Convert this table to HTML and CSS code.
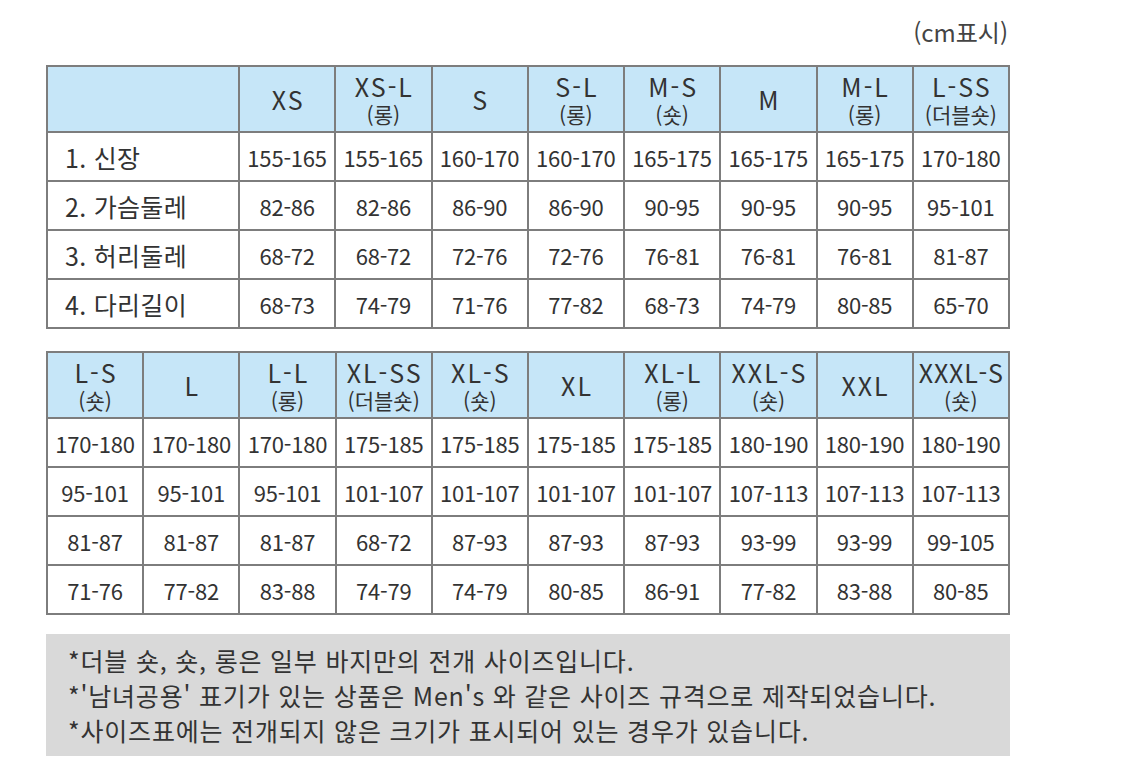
FILE: index.html
```html
<!DOCTYPE html>
<html lang="ko">
<head>
<meta charset="utf-8">
<title>사이즈표</title>
<link rel="stylesheet" href="styles.css">
</head>
<body>
<div class="page">
  <div class="unit">(cm표시)</div>

  <table class="size first">
    <colgroup>
      <col class="c-label"><col><col><col><col><col><col><col><col>
    </colgroup>
    <thead>
      <tr>
        <th></th>
        <th><span class="m">XS</span></th>
        <th><span class="m">XS-L</span><span class="s">(롱)</span></th>
        <th><span class="m">S</span></th>
        <th><span class="m">S-L</span><span class="s">(롱)</span></th>
        <th><span class="m">M-S</span><span class="s">(숏)</span></th>
        <th><span class="m">M</span></th>
        <th><span class="m">M-L</span><span class="s">(롱)</span></th>
        <th><span class="m">L-SS</span><span class="s">(더블숏)</span></th>
      </tr>
    </thead>
    <tbody>
      <tr><td class="label">1. 신장</td><td>155-165</td><td>155-165</td><td>160-170</td><td>160-170</td><td>165-175</td><td>165-175</td><td>165-175</td><td>170-180</td></tr>
      <tr><td class="label">2. 가슴둘레</td><td>82-86</td><td>82-86</td><td>86-90</td><td>86-90</td><td>90-95</td><td>90-95</td><td>90-95</td><td>95-101</td></tr>
      <tr><td class="label">3. 허리둘레</td><td>68-72</td><td>68-72</td><td>72-76</td><td>72-76</td><td>76-81</td><td>76-81</td><td>76-81</td><td>81-87</td></tr>
      <tr><td class="label">4. 다리길이</td><td>68-73</td><td>74-79</td><td>71-76</td><td>77-82</td><td>68-73</td><td>74-79</td><td>80-85</td><td>65-70</td></tr>
    </tbody>
  </table>

  <table class="size second">
    <thead>
      <tr>
        <th><span class="m">L-S</span><span class="s">(숏)</span></th>
        <th><span class="m">L</span></th>
        <th><span class="m">L-L</span><span class="s">(롱)</span></th>
        <th><span class="m">XL-SS</span><span class="s">(더블숏)</span></th>
        <th><span class="m">XL-S</span><span class="s">(숏)</span></th>
        <th><span class="m">XL</span></th>
        <th><span class="m">XL-L</span><span class="s">(롱)</span></th>
        <th><span class="m">XXL-S</span><span class="s">(숏)</span></th>
        <th><span class="m">XXL</span></th>
        <th><span class="m tight">XXXL-S</span><span class="s">(숏)</span></th>
      </tr>
    </thead>
    <tbody>
      <tr><td>170-180</td><td>170-180</td><td>170-180</td><td>175-185</td><td>175-185</td><td>175-185</td><td>175-185</td><td>180-190</td><td>180-190</td><td>180-190</td></tr>
      <tr><td>95-101</td><td>95-101</td><td>95-101</td><td>101-107</td><td>101-107</td><td>101-107</td><td>101-107</td><td>107-113</td><td>107-113</td><td>107-113</td></tr>
      <tr><td>81-87</td><td>81-87</td><td>81-87</td><td>68-72</td><td>87-93</td><td>87-93</td><td>87-93</td><td>93-99</td><td>93-99</td><td>99-105</td></tr>
      <tr><td>71-76</td><td>77-82</td><td>83-88</td><td>74-79</td><td>74-79</td><td>80-85</td><td>86-91</td><td>77-82</td><td>83-88</td><td>80-85</td></tr>
    </tbody>
  </table>

  <div class="notes">
    <p>*더블 숏, 숏, 롱은 일부 바지만의 전개 사이즈입니다.</p>
    <p>*'남녀공용' 표기가 있는 상품은 Men's 와 같은 사이즈 규격으로 제작되었습니다.</p>
    <p>*사이즈표에는 전개되지 않은 크기가 표시되어 있는 경우가 있습니다.</p>
  </div>
</div>
</body>
</html>
```

FILE: styles.css
```css
html, body {
  margin: 0;
  padding: 0;
  background: #ffffff;
}

body {
  font-family: "Noto Sans CJK KR", "Noto Sans", sans-serif;
  color: #333333;
}

.page {
  width: 964px;
  margin-left: 46px;
  padding-top: 17px;
}

.unit {
  text-align: right;
  font-size: 24px;
  line-height: 30px;
  padding-right: 2px;
  color: #444444;
}

.size {
  width: 964px;
  border-collapse: collapse;
  table-layout: fixed;
  border: 2px solid #7d7d7d;
}

.size.first {
  margin-top: 18px;
}

.size.second {
  margin-top: 22px;
}

.size col.c-label {
  width: 192px;
}

.size th,
.size td {
  border: 2px solid #7d7d7d;
  padding: 0;
  text-align: center;
  vertical-align: middle;
  white-space: nowrap;
  overflow: visible;
}

.size th {
  background: #c6e6f8;
  height: 64px;
  font-weight: normal;
  color: #333333;
}

.size th .m {
  display: block;
  font-size: 25px;
  line-height: 31px;
  letter-spacing: 2px;
  padding-left: 2px;
}

.size th .m.tight {
  letter-spacing: 0.8px;
  padding-left: 0.8px;
}

.size th .s {
  display: block;
  font-size: 21px;
  line-height: 25px;
  letter-spacing: 0;
}

.size td {
  height: 47px;
  font-size: 22px;
  letter-spacing: -0.2px;
  color: #333333;
}

.size td.label {
  text-align: left;
  padding-left: 17px;
  font-size: 25px;
  letter-spacing: 0.3px;
}

.notes {
  margin-top: 19px;
  background: #d9d9d9;
  padding: 9px 0 8px 22px;
  height: 105px;
}

.notes p {
  margin: 0;
  font-size: 25px;
  line-height: 35px;
  letter-spacing: 0.8px;
  color: #333333;
  white-space: nowrap;
}
```
